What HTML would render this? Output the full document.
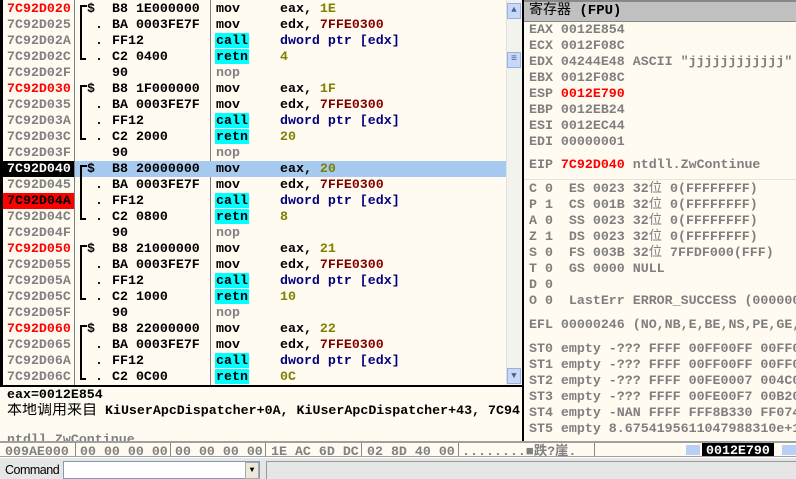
<!DOCTYPE html>
<html><head><meta charset="utf-8"><style>
*{margin:0;padding:0;box-sizing:border-box}
body{width:796px;height:479px;overflow:hidden;background:#fffbf0;position:relative;font-family:"Liberation Mono","Noto Sans CJK SC",monospace;font-weight:bold;font-size:13.3px}
.a{position:absolute;white-space:pre;line-height:16px}
.g{color:#808080}.r{color:#f00}.o{color:#808000}.dr{color:#800000}.nv{color:#000080}
.cy{background:#0ff;padding:0 1px;margin-left:-1px}
.rp{color:#7f7f7f;font-weight:bold}
</style></head><body>
<div style="position:absolute;left:0;top:0;width:506px;height:386px;overflow:hidden" id="d">
<div style="position:absolute;left:0;top:0;width:3px;height:386px;background:#000"></div>
<div style="position:absolute;left:74px;top:0;width:1px;height:386px;background:#808080"></div>
<div style="position:absolute;left:210px;top:0;width:1px;height:386px;background:#808080"></div>
<div style="position:absolute;left:75px;top:161px;width:431px;height:16px;background:#a6caf0"></div>
<div style="position:absolute;left:3px;top:161px;width:71px;height:16px;background:#000"></div>
<div style="position:absolute;left:3px;top:193px;width:71px;height:16px;background:#f00"></div>
<div id="rows"></div>
</div>
<div style="position:absolute;left:506px;top:0;width:16px;height:386px;background:#f3f3ee;border-left:1px solid #e0e0e0"></div>
<div style="position:absolute;left:507px;top:3px;width:14px;height:16px;background:#c8d8f8;border:1px solid #9ab0e0;color:#4d6185;font-size:9px;text-align:center;line-height:13px">▲</div>
<div style="position:absolute;left:507px;top:52px;width:14px;height:16px;background:#c8d8f8;border:1px solid #9ab0e0;color:#4d6185;font-size:10px;text-align:center;line-height:13px">≡</div>
<div style="position:absolute;left:507px;top:368px;width:14px;height:16px;background:#c8d8f8;border:1px solid #9ab0e0;color:#4d6185;font-size:9px;text-align:center;line-height:14px">▼</div>
<div style="position:absolute;left:0;top:385px;width:524px;height:2px;background:#000"></div>
<div style="position:absolute;left:522px;top:0;width:2px;height:442px;background:#000"></div>
<div style="position:absolute;left:524px;top:0;width:272px;height:22px;background:#c0c0c0;border-top:2px solid #888;border-bottom:1px solid #888"></div>
<div class="a" style="left:529px;top:3px;color:#000;font-weight:normal;font-size:14px;font-family:'Liberation Mono','Noto Sans CJK SC',monospace">寄存器 <b>(FPU)</b></div>
<div id="regs"></div>
<div style="position:absolute;left:524px;top:179px;width:272px;height:1px;background:#e8e4d8"></div>
<div class="a" style="left:7px;top:387px;color:#000">eax=0012E854</div>
<div class="a" style="left:7px;top:403px;color:#000;width:514px;overflow:hidden"><span style="font-weight:normal;font-size:15px">本地调用来自</span> KiUserApcDispatcher+0A, KiUserApcDispatcher+43, 7C94</div>
<div style="position:absolute;left:0;top:433px;width:522px;height:8px;overflow:hidden"><div class="a g" style="left:7px;top:-1px">ntdll.ZwContinue</div></div>
<div style="position:absolute;left:0;top:441px;width:796px;height:16px;background:#fffbf0;border-top:2px solid #a0a0a0;border-bottom:1px solid #a0a0a0;overflow:hidden">
<div class="a g" style="left:5px;top:1px">009AE000</div>
<div class="a g" style="left:80px;top:1px">00 00 00 00</div>
<div class="a g" style="left:175px;top:1px">00 00 00 00</div>
<div class="a g" style="left:271px;top:1px">1E AC 6D DC</div>
<div class="a g" style="left:367px;top:1px">02 8D 40 00</div>
<div class="a g" style="left:462px;top:1px">........■跌?崖.</div>
<div style="position:absolute;left:75px;top:0;width:1px;height:14px;background:#888"></div>
<div style="position:absolute;left:170px;top:0;width:1px;height:14px;background:#888"></div>
<div style="position:absolute;left:265px;top:0;width:1px;height:14px;background:#888"></div>
<div style="position:absolute;left:361px;top:0;width:1px;height:14px;background:#888"></div>
<div style="position:absolute;left:458px;top:0;width:1px;height:14px;background:#888"></div>
<div style="position:absolute;left:594px;top:0;width:1px;height:14px;background:#888"></div>
<div style="position:absolute;left:686px;top:2px;width:14px;height:10px;background:#b8cff8"></div>
<div style="position:absolute;left:702px;top:0;width:72px;height:14px;background:#000"></div>
<div class="a" style="left:706px;top:0;color:#fff">0012E790</div>
<div style="position:absolute;left:782px;top:2px;width:14px;height:10px;background:#b8cff8"></div>
</div>
<div style="position:absolute;left:0;top:457px;width:796px;height:22px;background:#e6e6e6;border-top:1px solid #fff"></div>
<div class="a" style="left:5px;top:462px;font-family:'Liberation Sans',sans-serif;font-weight:normal;font-size:12.5px;color:#000;letter-spacing:-0.5px">Command</div>
<div style="position:absolute;left:63px;top:461px;width:197px;height:18px;background:#fff;border:1px solid #7f9db9"></div>
<div style="position:absolute;left:245px;top:462px;width:14px;height:17px;background:#ece9d8;border:1px solid #aaa;font-size:8px;text-align:center;line-height:16px;color:#000">▼</div>
<div style="position:absolute;left:266px;top:461px;width:530px;height:18px;border-top:1px solid #999;border-left:1px solid #999;background:#e6e6e6"></div>
<script>
var R=[
['7C92D020','r','┌$','B8 1E000000','mov','eax, <span class=o>1E</span>'],
['7C92D025','g','.','BA 0003FE7F','mov','edx, <span class=dr>7FFE0300</span>'],
['7C92D02A','g','.','FF12','<span class=cy>call</span>','<span class=nv>dword ptr [edx]</span>'],
['7C92D02C','g','└.','C2 0400','<span class=cy>retn</span>','<span class=o>4</span>'],
['7C92D02F','g','','90','<span class=g>nop</span>',''],
['7C92D030','r','┌$','B8 1F000000','mov','eax, <span class=o>1F</span>'],
['7C92D035','g','.','BA 0003FE7F','mov','edx, <span class=dr>7FFE0300</span>'],
['7C92D03A','g','.','FF12','<span class=cy>call</span>','<span class=nv>dword ptr [edx]</span>'],
['7C92D03C','g','└.','C2 2000','<span class=cy>retn</span>','<span class=o>20</span>'],
['7C92D03F','g','','90','<span class=g>nop</span>',''],
['7C92D040','w','┌$','B8 20000000','mov','eax, <span class=o>20</span>'],
['7C92D045','g','.','BA 0003FE7F','mov','edx, <span class=dr>7FFE0300</span>'],
['7C92D04A','k','.','FF12','<span class=cy>call</span>','<span class=nv>dword ptr [edx]</span>'],
['7C92D04C','g','└.','C2 0800','<span class=cy>retn</span>','<span class=o>8</span>'],
['7C92D04F','g','','90','<span class=g>nop</span>',''],
['7C92D050','r','┌$','B8 21000000','mov','eax, <span class=o>21</span>'],
['7C92D055','g','.','BA 0003FE7F','mov','edx, <span class=dr>7FFE0300</span>'],
['7C92D05A','g','.','FF12','<span class=cy>call</span>','<span class=nv>dword ptr [edx]</span>'],
['7C92D05C','g','└.','C2 1000','<span class=cy>retn</span>','<span class=o>10</span>'],
['7C92D05F','g','','90','<span class=g>nop</span>',''],
['7C92D060','r','┌$','B8 22000000','mov','eax, <span class=o>22</span>'],
['7C92D065','g','.','BA 0003FE7F','mov','edx, <span class=dr>7FFE0300</span>'],
['7C92D06A','g','.','FF12','<span class=cy>call</span>','<span class=nv>dword ptr [edx]</span>'],
['7C92D06C','g','└.','C2 0C00','<span class=cy>retn</span>','<span class=o>0C</span>']];
var h='';
R.forEach(function(r,i){var t=1+16*i;var c=r[1]=='r'?'#f00':r[1]=='w'?'#fff':r[1]=='k'?'#000':'#808080';
h+='<div class="a" style="left:7px;top:'+t+'px;color:'+c+'">'+r[0]+'</div>';
var m=r[2].replace('┌','').replace('└','');
if(m)h+='<div class="a" style="left:87px;top:'+t+'px;color:#000">'+(m=='.'?' .':m)+'</div>';
h+='<div class="a" style="left:112px;top:'+t+'px;color:#000">'+r[3]+'</div>';
h+='<div class="a" style="left:216px;top:'+t+'px;color:#000">'+r[4]+'</div>';
h+='<div class="a" style="left:280px;top:'+t+'px;color:#000">'+r[5]+'</div>';
if(r[2]=='┌$'){h+='<div style="position:absolute;left:80px;top:'+(t+4)+'px;width:7px;height:'+(16*3+6)+'px;border-left:2px solid #000;border-top:2px solid #000"></div><div style="position:absolute;left:80px;top:'+(t+57)+'px;width:6px;height:2px;background:#000"></div>';}
});
document.getElementById('rows').innerHTML=h;
var G=[[22,'EAX 0012E854'],[38,'ECX 0012F08C'],[54,'EDX 04244E48 ASCII "jjjjjjjjjjjj"'],[70,'EBX 0012F08C'],[86,'ESP <span class=r>0012E790</span>'],[102,'EBP 0012EB24'],[118,'ESI 0012EC44'],[134,'EDI 00000001'],[157,'EIP <span class=r>7C92D040</span> ntdll.ZwContinue'],
[181,'C 0  ES 0023 32<span style="font-weight:normal">位</span> 0(FFFFFFFF)'],[197,'P 1  CS 001B 32<span style="font-weight:normal">位</span> 0(FFFFFFFF)'],[213,'A 0  SS 0023 32<span style="font-weight:normal">位</span> 0(FFFFFFFF)'],[229,'Z 1  DS 0023 32<span style="font-weight:normal">位</span> 0(FFFFFFFF)'],[245,'S 0  FS 003B 32<span style="font-weight:normal">位</span> 7FFDF000(FFF)'],[261,'T 0  GS 0000 NULL'],[277,'D 0'],[293,'O 0  LastErr ERROR_SUCCESS (00000000)'],
[317,'EFL 00000246 (NO,NB,E,BE,NS,PE,GE,G)'],[341,'ST0 empty -??? FFFF 00FF00FF 00FF00FF'],[357,'ST1 empty -??? FFFF 00FF00FF 00FF00FF'],[373,'ST2 empty -??? FFFF 00FE0007 004C0000'],[389,'ST3 empty -??? FFFF 00FE00F7 00B20000'],[405,'ST4 empty -NAN FFFF FFF8B330 FF074000'],[421,'ST5 empty 8.6754195611047988310e+1']];
var s='<div style="position:absolute;left:524px;top:23px;width:272px;height:418px;overflow:hidden">';
G.forEach(function(g){s+='<div class="a rp" style="left:5px;top:'+(g[0]-23)+'px">'+g[1]+'</div>';});
document.getElementById('regs').innerHTML=s+'</div>';
</script>
</body></html>
